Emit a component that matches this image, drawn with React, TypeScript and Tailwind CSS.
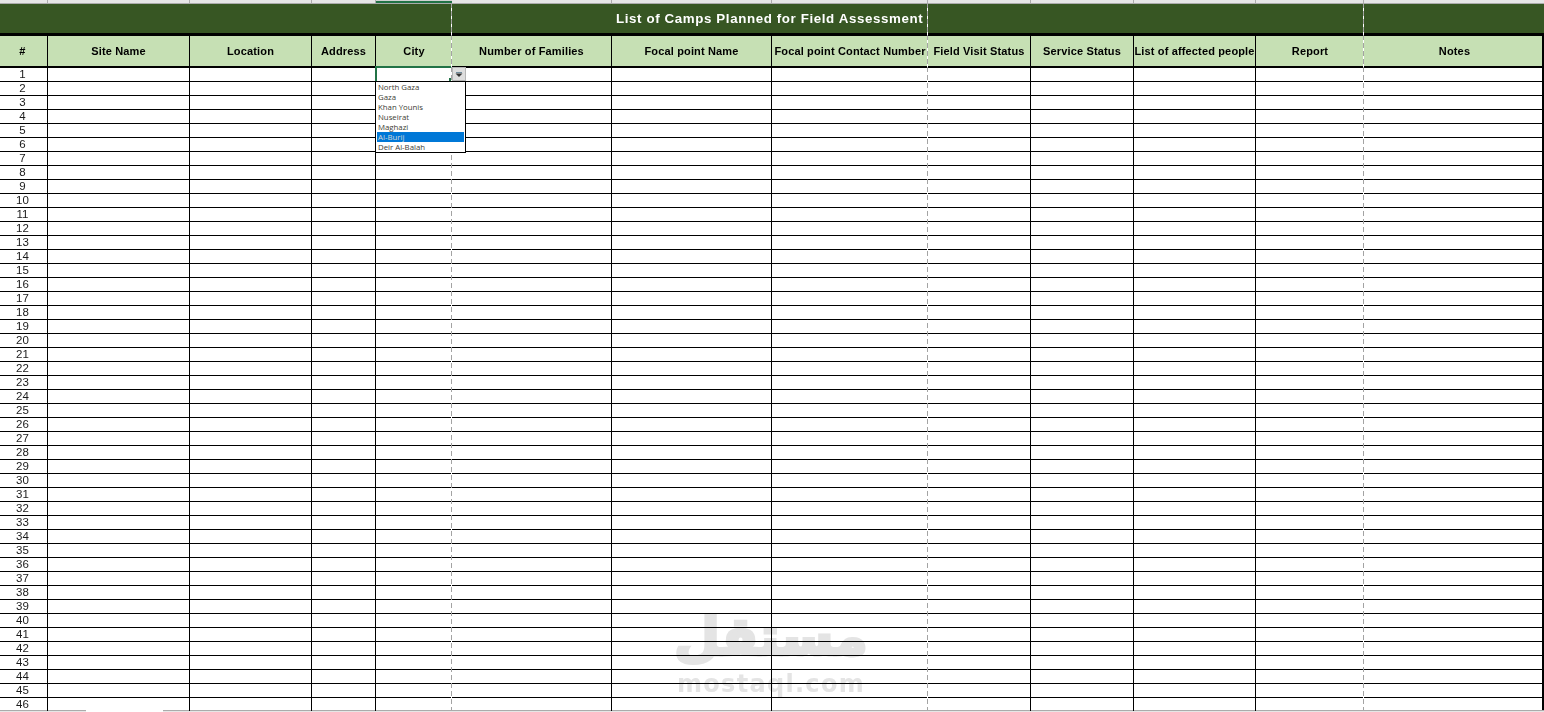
const cols = "grid-cols-[48px_142px_122px_64px_76px_160px_160px_156px_103px_103px_122px_108px_178px]";

const headers = [
    "#",
    "Site Name",
    "Location",
    "Address",
    "City",
    "Number of Families",
    "Focal point Name",
    "Focal point Contact Number",
    "Field Visit Status",
    "Service Status",
    "List of affected people",
    "Report",
    "Notes",
];

const cities = ["North Gaza", "Gaza", "Khan Younis", "Nuseirat", "Maghazi", "Al-Burij", "Deir Al-Balah"];

// these columns sit on a page break, the dashes are drawn over them
const noBorder = [4, 7, 11, 12];
const rows = Array.from({ length: 46 }, (_, i) => i + 1);

function PageBreaks() {
    return <div className={`absolute inset-0 grid ${cols} pt-[3px] pb-[2px] pointer-events-none`}>
        {headers.map((h, i) => (
            <div key={h} className="flex justify-end">
                {noBorder.includes(i) && i !== 12 && (
                    <div className="w-px h-full bg-[repeating-linear-gradient(to_bottom,#a3a3a3_0,#a3a3a3_5px,#ffffff_5px,#ffffff_8px)]"></div>
                )}
            </div>
        ))}
    </div>
}

function TopStrip() {
    return <div className={`grid ${cols} h-1 shrink-0 bg-[#e6e6e6] border-b border-[#ababab]`}>
        {headers.map((h, i) => (
            <div key={h} className={i === 4 ? "bg-[#d2d2d2] border-b-2 border-[#217346]" : i === 12 ? "" : "border-r border-[#ababab]"}></div>
        ))}
    </div>
}

function HeaderRow() {
    return <div className={`grid ${cols} h-[30px] bg-[#c6e0b4]`}>
        {headers.map((h, i) => (
            <div key={h} className={`flex items-center justify-center overflow-hidden whitespace-nowrap text-[11px] font-bold tracking-[0.15px] text-black ${noBorder.includes(i) ? "" : "border-r border-black"} ${i === 12 ? "pl-[3px]" : ""} ${i === 0 ? "pr-[2px]" : ""}`}>
                {h}
            </div>
        ))}
    </div>
}

function CityDropdown() {
    return <>
        <div className="absolute -left-px -top-[2px] w-[77px] h-4 border-l-2 border-t-2 border-[#217346]"></div>
        <div className="absolute right-0 bottom-0 w-[3px] h-[3px] bg-[#217346]"></div>
        <div className="absolute z-10 left-full -top-px w-[14px] h-[14px] flex items-center justify-center bg-[#dedede] border border-[#b5b5b5]">
            <svg width="8" height="5" viewBox="0 0 8 5">
                <path d="M1 0H7V1H1Z" fill="#6f8c9c" />
                <path d="M0.5 1.5H7.5L4 5Z" fill="#333333" />
            </svg>
        </div>
        <div className="absolute z-10 -left-px top-[13px] w-[91px] h-[72px] flex flex-col bg-white border border-black px-px">
            {cities.map((c) => (
                <div key={c} className={`h-[10px] pl-px text-[7.8px] leading-[10px] whitespace-nowrap font-['Open_Sans',sans-serif] ${c === "Al-Burij" ? "bg-[#0078d7] text-[#d8d8d8]" : "text-[#404035]"}`}>
                    {c}
                </div>
            ))}
        </div>
    </>
}

function Row({ n }: { n: number }) {
    return <div className={`grid ${cols} h-[14px] border-b border-black`}>
        {headers.map((h, i) => (
            <div key={h} className={`relative flex items-center justify-center text-[11.5px] leading-none text-[#1a1a1a] ${noBorder.includes(i) ? "" : "border-r border-black"} ${i === 0 ? "pr-[2px]" : ""}`}>
                {i === 0 ? n : ""}
                {n === 1 && i === 4 && <CityDropdown />}
            </div>
        ))}
    </div>
}

function Watermark() {
    return <div className="absolute left-[678px] top-[604px] w-[186px] flex flex-col items-center mix-blend-multiply text-[#e4e4e4]">
        <div dir="rtl" className="h-[67px] text-[53px] leading-[66px] font-bold font-['DejaVu_Sans',sans-serif] [-webkit-text-stroke:3px_#e4e4e4]">مستقل</div>
        <div className="text-[24px] leading-[26px] font-bold tracking-[1.3px] whitespace-nowrap font-['DejaVu_Sans',sans-serif]">mostaql.com</div>
    </div>
}

export default function App() {
    return <div className="relative flex flex-col w-[1544px] h-[712px] overflow-hidden bg-white font-['Liberation_Sans',Arial,sans-serif]">
        <TopStrip />
        <div className="flex items-center shrink-0 h-[29px] pl-[616px] pt-px bg-[#375623] text-[13.33px] font-bold tracking-[0.61px] text-white">
            List of Camps Planned for Field Assessment
        </div>
        <div className="flex-1 min-h-0 border-r-2 border-black">
            <div className="h-[3px] bg-black"></div>
            <HeaderRow />
            <div className="h-[2px] bg-black"></div>
            {rows.map((n) => <Row key={n} n={n} />)}
        </div>
        <div className="flex shrink-0 h-[2px] bg-[#e6e6e6] border-t border-[#ababab]">
            <div className="ml-[86px] w-[77px] -mt-px h-[2px] bg-white"></div>
        </div>

        <PageBreaks />
        <Watermark />
    </div>
}
